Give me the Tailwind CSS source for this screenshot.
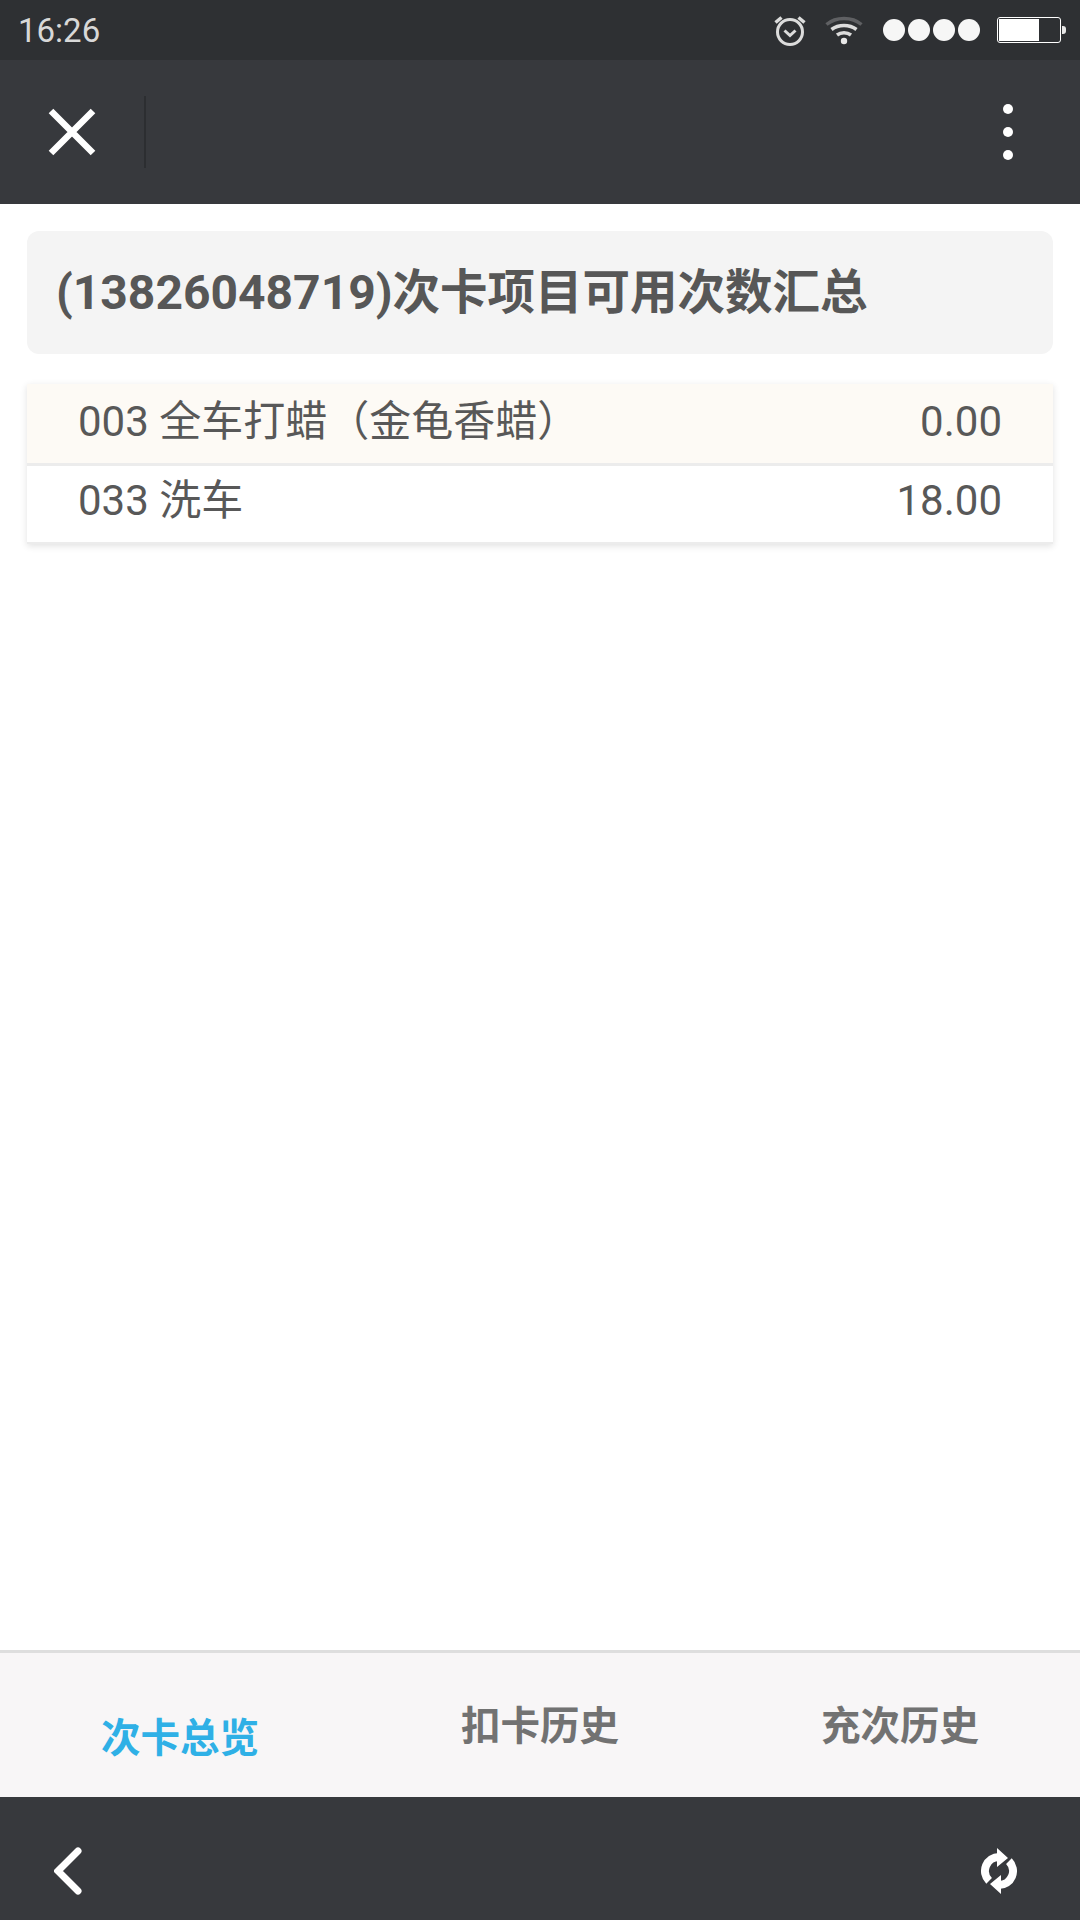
<!DOCTYPE html>
<html lang="zh">
<head>
    <meta charset="UTF-8">
    <meta name="viewport" content="width=device-width, initial-scale=1.0">
    <title>次卡总览</title>
    <script src="https://cdn.jsdelivr.net/npm/@tailwindcss/browser@4"></script>
</head>
<body class="bg-white font-['Roboto','Noto_Sans_CJK_SC',sans-serif]">
    <div class="w-[1080px] h-[1920px] flex flex-col overflow-hidden">
        <!-- Status bar -->
        <div class="h-[60px] bg-[#2e3033] flex items-center pl-[18px] pr-[14px] text-[#d8d8d8]">
            <span class="text-[33px] leading-none">16:26</span>
            <div class="ml-auto flex items-center">
                <svg class="w-[34px] h-[34px]" viewBox="0 0 34 34" fill="none" stroke="#dcdcdc" stroke-width="3">
                    <circle cx="17" cy="19" r="12.5"/>
                    <path d="M11.5 17.5l5.5 5 5.5-5"/>
                    <path d="M2.5 9.5l6-5M31.5 9.5l-6-5" stroke-width="3.5"/>
                </svg>
                <svg class="w-[38px] h-[30px] ml-[18px]" viewBox="0 0 38 30" fill="none" stroke-width="3.5">
                    <path d="M1.5 9.5C11 1.5 27 1.5 36.5 9.5" stroke="#5f6063"/>
                    <path d="M6.5 14.5C13.5 9 24.5 9 31.5 14.5" stroke="#dcdcdc"/>
                    <path d="M12 20c4-3 10-3 14 0" stroke="#dcdcdc"/>
                    <circle cx="19" cy="26" r="3.2" fill="#e8e8e8" stroke="none"/>
                </svg>
                <div class="flex gap-[3px] ml-[20px]">
                    <div class="w-[22px] h-[22px] rounded-full bg-[#f6f6f6]"></div>
                    <div class="w-[22px] h-[22px] rounded-full bg-[#f6f6f6]"></div>
                    <div class="w-[22px] h-[22px] rounded-full bg-[#f6f6f6]"></div>
                    <div class="w-[22px] h-[22px] rounded-full bg-[#f6f6f6]"></div>
                </div>
                <div class="w-[64px] h-[26px] ml-[17px] border border-white rounded-[3px] p-px">
                    <div class="w-[40px] h-full bg-white"></div>
                </div>
                <div class="w-[4px] h-[8px] ml-[1px] bg-[#e8e8e8] rounded-r-[3px]"></div>
            </div>
        </div>

        <!-- Top toolbar -->
        <div class="h-[144px] bg-[#37393d] flex items-center">
            <div class="w-[144px] flex justify-center">
                <svg class="w-[48px] h-[48px]" viewBox="0 0 48 48" fill="none" stroke="#ffffff" stroke-width="6.5">
                    <path d="M3 3l42 42M45 3L3 45"/>
                </svg>
            </div>
            <div class="w-[2px] h-[72px] bg-[#2c2e31]"></div>
            <div class="ml-auto mr-[67px] flex flex-col gap-[13px]">
                <div class="w-[10px] h-[10px] rounded-full bg-white"></div>
                <div class="w-[10px] h-[10px] rounded-full bg-white"></div>
                <div class="w-[10px] h-[10px] rounded-full bg-white"></div>
            </div>
        </div>

        <!-- Content -->
        <div class="flex-1 px-[27px] pt-[27px]">
            <div class="h-[123px] bg-[#f4f4f4] rounded-[12px] flex items-center pl-[29px] pt-[1px]">
                <h1 class="text-[48px] font-bold text-[#575757] leading-none">(13826048719)<span class="text-[47.5px]">次卡项目可用次数汇总</span></h1>
            </div>
            <div class="mt-[30px] shadow-[0_2px_7px_rgba(0,0,0,0.12)] text-[42px] text-[#585858]">
                <div class="h-[82px] bg-[#fdfaf5] flex items-center justify-between px-[51px] pb-[5px] border-b-[3px] border-[#ececec]">
                    <span>003 全车打蜡（金龟香蜡）</span>
                    <span>0.00</span>
                </div>
                <div class="h-[78px] bg-white flex items-center justify-between px-[51px] pb-[7px] border-b-[2px] border-[#ececec]">
                    <span>033 洗车</span>
                    <span>18.00</span>
                </div>
            </div>
        </div>

        <!-- Tabs -->
        <div class="h-[147px] bg-[#f8f6f7] border-t-[3px] border-[#dedede] grid grid-cols-3 text-[39.5px] font-bold text-[#727272]">
            <div class="flex justify-center items-center pt-[28px] text-[#2fb0e6]">次卡总览</div>
            <div class="flex justify-center items-center pt-[4px]">扣卡历史</div>
            <div class="flex justify-center items-center pt-[4px]">充次历史</div>
        </div>

        <!-- Bottom toolbar -->
        <div class="h-[123px] bg-[#37393d] flex items-center justify-between pt-[24px] pl-[54px] pr-[63px]">
            <svg class="w-[28px] h-[48px]" viewBox="0 0 28 48" fill="none" stroke="#ffffff" stroke-width="7" stroke-linecap="round" stroke-linejoin="miter">
                <path d="M24 4L4 24l20 20"/>
            </svg>
            <svg class="w-[36px] h-[46px]" viewBox="0 0 36 46" fill="none">
                <path d="M18 9A14 14 0 0 0 8.1 32.9" stroke="#ffffff" stroke-width="8"/>
                <path d="M18 37A14 14 0 0 0 27.9 13.1" stroke="#ffffff" stroke-width="8"/>
                <path d="M16 0l11 10-11 9zM20 46L9 36l11-9z" fill="#ffffff"/>
            </svg>
        </div>
    </div>
</body>
</html>
